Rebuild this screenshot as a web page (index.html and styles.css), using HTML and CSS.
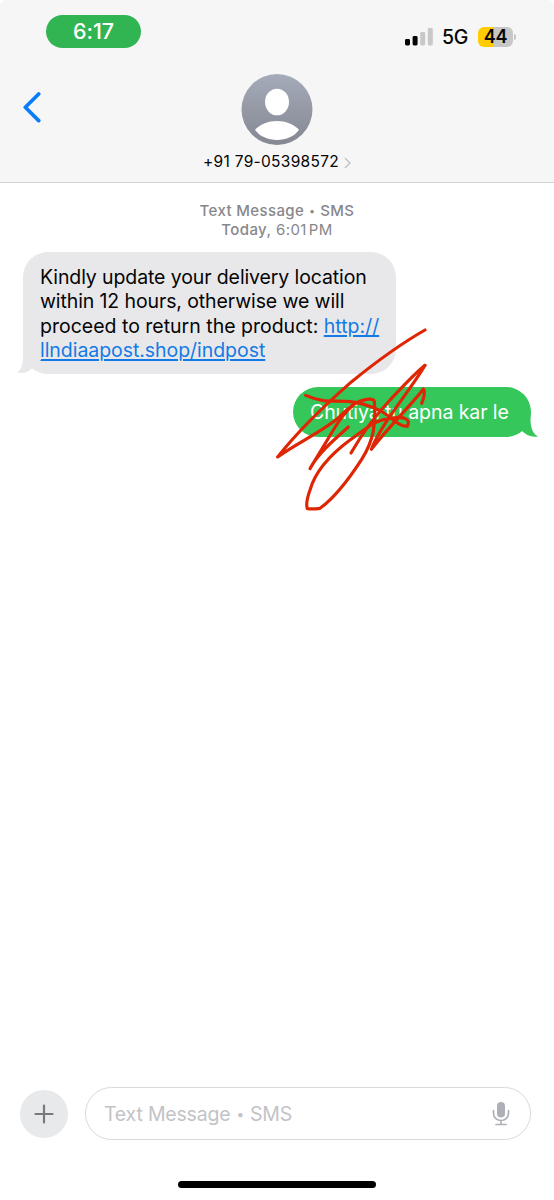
FILE: index.html
```
<!DOCTYPE html>
<html lang="en">
<head>
<meta charset="utf-8">
<title>Messages</title>
<link rel="stylesheet" href="styles.css">
</head>
<body>
<div class="phone">
  <header class="header">
    <div class="status">
      <span class="time">6:17</span>
      <div class="indicators">
        <svg class="signal" width="28" height="18" viewBox="0 0 28 18">
          <rect x="0" y="11" width="5" height="6.5" rx="1.4"/>
          <rect x="7.6" y="8" width="5" height="9.5" rx="1.4"/>
          <rect class="off" x="15.2" y="4" width="5" height="13.5" rx="1.4"/>
          <rect class="off" x="22.8" y="0" width="5" height="17.5" rx="1.4"/>
        </svg>
        <span class="network">5G</span>
        <span class="battery">44</span>
        <span class="battery-cap"></span>
      </div>
    </div>
    <div class="contact-row">
      <svg class="back" width="20" height="32" viewBox="0 0 20 32"><path d="M16.7 3 3.3 16.3 16.7 29.6"/></svg>
      <div class="contact">
        <svg class="avatar" width="72" height="72" viewBox="0 0 72 72">
          <defs>
            <linearGradient id="shade" x1="0" y1="0" x2="0" y2="1"><stop offset="0" stop-color="#a5abb9"/><stop offset="1" stop-color="#858793"/></linearGradient>
          </defs>
          <circle cx="36" cy="35.5" r="35.5" fill="url(#shade)"/>
          <ellipse cx="36" cy="28" rx="12" ry="13.3" fill="#fff"/>
          <path d="M14 55.8C19.5 50 27.5 47 36 47S52.5 50 58 55.8C53.5 62.5 45 66 36 66S18.5 62.5 14 55.8Z" fill="#fff"/>
        </svg>
        <div class="number"><span>+91 79-05398572</span><svg width="7" height="12" viewBox="0 0 7 12"><path d="M1 1 6 6 1 11"/></svg></div>
      </div>
    </div>
  </header>
  <main class="thread">
    <div class="stamp"><b class="service">Text Message <span class="dot">•</span> SMS</b><div class="when"><b>Today,</b> 6:01<span class="pm">PM</span></div></div>
    <div class="bubble incoming">
      <div class="l1">Kindly update your delivery location</div>
      <div class="l2">within 12 hours, otherwise we will</div>
      <div class="l3">proceed to return the product: <a>http://</a></div>
      <div class="l4"><a>llndiaapost.shop/indpost</a></div>
      <svg class="tail tail-left" width="24" height="26" viewBox="0 0 24 26"><path d="M6 0V8C6 15 5 22 0 24.5 6 26 12 24 15 20L24 12V0Z"/></svg>
    </div>
    <div class="bubble outgoing">
      <span>Chutiya tu apna kar le</span>
      <svg class="tail tail-right" width="24" height="26" viewBox="0 0 24 26"><path d="M16.5 0V8C16.5 16 18.5 22.5 24 25.5 17.5 26.5 12 24 8 20L0 12V0Z"/></svg>
      <svg class="scribble" width="180" height="200" viewBox="0 0 540 600">
        <path d="M480 30C410 70 340 120 260 185C180 255 90 345 38 411C95 370 165 338 215 298C245 270 270 243 305 238Q325 235 328 244C333 310 327 360 290 418C250 480 202 538 165 565Q145 568 127 566Q121 549 135 510C152 450 197 403 255 360C300 327 325 306 355 299C385 294 405 288 421 296Q435 300 427 319C395 318 380 290 345 272C310 255 285 248 255 245C230 242 200 245 175 242Q145 236 122 226"/>
        <path d="M265 254C242 275 220 305 205 330L135 446C155 405 205 361 250 321"/>
        <path d="M480 136C439 170 410 204 375 240C325 293 295 335 258 399"/>
        <path d="M480 136C441 205 351 306 319 388C375 315 442 252 475 207Q483 218 470 250"/>
      </svg>
    </div>
  </main>
  <footer class="composer">
    <div class="entry-row">
      <div class="add"><svg width="20" height="20" viewBox="0 0 20 20"><path d="M10 1.5V18.5M1.5 10H18.5"/></svg></div>
      <div class="field">
        <span>Text Message <span class="dot">•</span> SMS</span>
        <svg class="mic" width="18" height="26" viewBox="0 0 18 26"><rect x="5" y="1" width="8" height="15.5" rx="4"/><path d="M1.5 9.5V12C1.5 22 16.5 22 16.5 12V9.5M9 19.5V23.5M4 23.5H14"/></svg>
      </div>
    </div>
    <div class="home"></div>
  </footer>
</div>
</body>
</html>
```
FILE: styles.css
```
* { box-sizing: border-box; }
body { margin: 0; background: #fff; font-family: Inter, "Liberation Sans", sans-serif; color: #050505; }
.phone { width: 554px; height: 1200px; display: flex; flex-direction: column; background: #fff; }
.phone svg { display: block; flex: none; }
.header { height: 183px; flex: none; background: #f6f6f6; border-bottom: 1px solid #d3d3d4; border-radius: 6px 6px 0 0; padding-top: 15px; }
.status { display: flex; justify-content: space-between; align-items: flex-start; height: 59px; padding: 0 38px 0 46px; }
.time { width: 95px; height: 33px; border-radius: 17px; background: #31b452; color: #fff; font-size: 21.5px; font-weight: 500; line-height: 33px; text-align: center; letter-spacing: -.1px; }
.indicators { display: flex; align-items: center; padding-top: 12px; }
.signal { fill: #050505; }
.signal .off { fill: #c8c8c8; }
.network { margin-left: 9px; width: 27px; font-size: 19.5px; line-height: 20px; font-weight: 500; letter-spacing: -.2px; }
.battery { margin-left: 9px; width: 35px; height: 20px; border-radius: 6px; background: linear-gradient(90deg, #fc0 0 46%, #c7c7c7 46%); font-weight: 600; font-size: 18px; line-height: 20px; text-align: center; letter-spacing: -.3px; }
.battery-cap { width: 2px; height: 6px; margin-left: 1px; background: #c7c7c7; border-radius: 0 2px 2px 0; }
.contact-row { display: grid; grid-template-columns: 100px 1fr 100px; align-items: start; }
.back { margin: 17px 0 0 22px; fill: none; stroke: #087cfb; stroke-width: 3.7; stroke-linecap: round; stroke-linejoin: round; }
.contact { display: flex; flex-direction: column; align-items: center; }
.number { display: flex; align-items: center; gap: 5px; margin-top: 6px; font-size: 15.5px; line-height: 20px; letter-spacing: .3px; }
.number svg { fill: none; stroke: #c4c4c6; stroke-width: 1.5; margin-top: 2px; }
.thread { flex: 1; display: flex; flex-direction: column; }
.stamp { padding-top: 19px; height: 69px; text-align: center; font-size: 15px; line-height: 18.5px; color: #87878b; letter-spacing: .4px; }
.stamp b { font-weight: 500; }
.stamp .service { letter-spacing: .38px; }
.dot { font-size: .7em; vertical-align: .08em; line-height: 1; padding: 0 .06em; }
.pm { margin-left: 2px; }
.bubble { position: relative; color: #050505; font-size: 19.5px; line-height: 24.3px; letter-spacing: -.11px; white-space: nowrap; }
.incoming { width: 373px; height: 122px; margin-left: 23px; padding: 13px 17px; background: #e8e8ea; border-radius: 25px; }
.incoming div { height: 24.3px; }
.incoming .l3 { letter-spacing: 0; }
.incoming .l4 { letter-spacing: -.05px; }
.incoming a { color: #147be5; text-decoration: underline; text-decoration-thickness: 1.5px; text-underline-offset: 2px; text-decoration-skip-ink: auto; }
.outgoing { align-self: flex-end; width: 238px; height: 50px; margin: 13px 23px 0 0; padding: 13px 17px; background: #35c759; color: #fff; border-radius: 25px; letter-spacing: -.08px; }
.tail { position: absolute; bottom: 0; }
.tail-left { left: -6px; fill: #e8e8ea; }
.tail-right { right: -7px; fill: #35c759; }
.scribble { position: absolute; left: -28px; top: -67px; fill: none; stroke: #df2604; stroke-width: 9.5; stroke-linecap: round; stroke-linejoin: round; }
.composer { height: 113px; flex: none; }
.entry-row { display: flex; align-items: center; height: 53px; padding: 0 23px 0 20px; }
.add { width: 48px; height: 48px; border-radius: 50%; background: #e8e9eb; display: grid; place-items: center; }
.add svg { fill: none; stroke: #77797d; stroke-width: 2.2; stroke-linecap: round; }
.field { flex: 1; margin-left: 17px; height: 53px; border: 1px solid #dadadc; border-radius: 27px; padding: 0 20px 0 18px; display: flex; align-items: center; justify-content: space-between; font-size: 19.5px; letter-spacing: -.2px; color: #c2c3c6; }
.mic rect { fill: #adb1b7; }
.mic path { fill: none; stroke: #adb1b7; stroke-width: 1.7; stroke-linecap: round; }
.home { width: 198px; height: 7px; border-radius: 4px; background: #000; margin: 41px auto 0 178px; }
```
